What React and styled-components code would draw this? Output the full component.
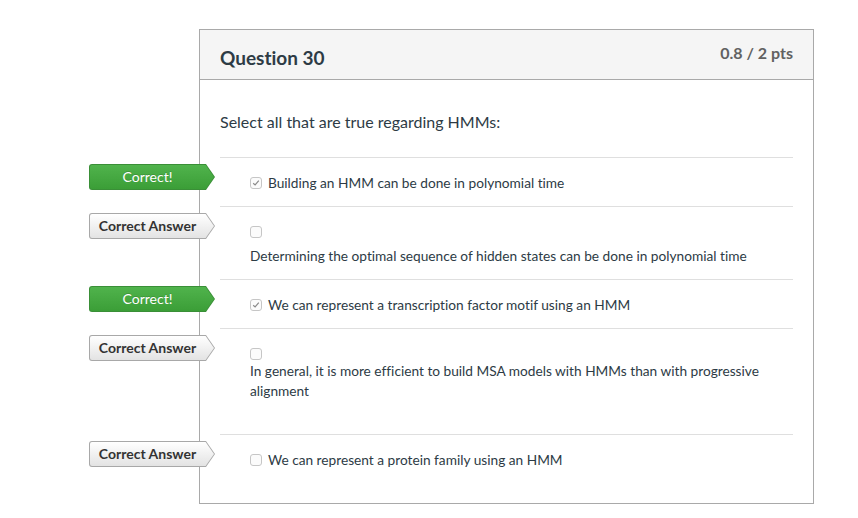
import React from "react";
import styled, { createGlobalStyle } from "styled-components";

const Global = createGlobalStyle`
  html, body { margin: 0; padding: 0; background: #fff; }
  body { font-family: Lato, "Open Sans", sans-serif; color: #2d3b45; }
`;

const Page = styled.div`
  padding: 29px 0 0 199px;
`;

const Card = styled.div`
  width: 613px;
  border: 1px solid #a9a9a9;
  background: #fff;
`;

const Header = styled.div`
  height: 49px;
  background: #f5f5f5;
  border-bottom: 1px solid #a9a9a9;
  display: flex;
  justify-content: space-between;
  align-items: flex-start;
  padding: 0 20px;
`;

const Title = styled.h2`
  margin: 0;
  padding-top: 16px;
  font-size: 19px;
  line-height: 24px;
  font-weight: 700;
  color: #2d3b45;
  font-variant-ligatures: none;
`;

const Points = styled.div`
  padding-top: 12px;
  font-size: 16px;
  line-height: 22px;
  font-weight: 700;
  color: #616161;
`;

const Body = styled.div`
  padding: 31px 20px 20px;
`;

const Prompt = styled.p`
  margin: 0 0 24px;
  font-size: 16px;
  line-height: 22px;
`;

const AnswerList = styled.div`
  display: flex;
  flex-direction: column;
`;

const Answer = styled.div`
  position: relative;
  border-top: 1px solid #dfdfdf;
  padding: 15px 0 ${(p) => p.$bottom}px 30px;
  font-size: 13.7px;
  line-height: 20px;
  font-variant-ligatures: none;
`;

const Line = styled.div`
  display: flex;
  align-items: center;
  gap: 6px;
  min-height: 20px;
`;

const AnswerText = styled.div`
  margin-top: ${(p) => p.$gap}px;
`;

const Box = styled.span`
  width: 12px;
  height: 12px;
  box-sizing: border-box;
  border: 1px solid #c6c6c6;
  border-radius: 3px;
  background: #fbfbfb;
  display: inline-flex;
  align-items: center;
  justify-content: center;
  flex: none;
`;

const Tag = styled.div`
  position: absolute;
  left: -131px;
  top: 6px;
  width: 126px;
  height: 26px;
  border-radius: 3px 0 0 3px;
  background: ${(p) => (p.$correct ? "#3a8f37" : "#a8a8a8")};
  clip-path: polygon(0 0, 117px 0, 126px 50%, 117px 100%, 0 100%);
  display: flex;
  align-items: center;
  justify-content: center;
  padding-right: 9px;
  box-sizing: border-box;
  font-size: 14px;
  font-weight: ${(p) => (p.$correct ? 400 : 700)};
  color: ${(p) => (p.$correct ? "#fff" : "#333")};
  text-shadow: ${(p) => (p.$correct ? "0 -1px 0 rgba(0,0,0,0.15)" : "none")};

  &::before {
    content: "";
    position: absolute;
    inset: 1px;
    border-radius: 2px 0 0 2px;
    background: ${(p) =>
      p.$correct
        ? "linear-gradient(#50b34c, #3b9e37)"
        : "linear-gradient(#ffffff, #e3e3e3)"};
    clip-path: polygon(0 0, 115.6px 0, 124px 50%, 115.6px 100%, 0 100%);
  }
`;

const TagLabel = styled.span`
  position: relative;
`;

const Check = () => (
  <svg width="8" height="8" viewBox="0 0 8 8">
    <path d="M1.2 4.2 L3.1 6 L6.8 1.6" fill="none" stroke="#8a8a8a" strokeWidth="1.2" />
  </svg>
);

const answers = [
  { tag: "correct", checked: true, text: "Building an HMM can be done in polynomial time", bottom: 13 },
  { tag: "answer", checked: false, block: true, gap: 4, text: "Determining the optimal sequence of hidden states can be done in polynomial time", bottom: 13 },
  { tag: "correct", checked: true, text: "We can represent a transcription factor motif using an HMM", bottom: 13 },
  { tag: "answer", checked: false, block: true, gap: -3, text: "In general, it is more efficient to build MSA models with HMMs than with progressive alignment", bottom: 33, wrap: 520 },
  { tag: "answer", checked: false, text: "We can represent a protein family using an HMM", bottom: 13 },
];

export default function App() {
  return (
    <Page>
      <Global />
      <Card>
        <Header>
          <Title>Question 30</Title>
          <Points>0.8 / 2 pts</Points>
        </Header>
        <Body>
          <Prompt>Select all that are true regarding HMMs:</Prompt>
          <AnswerList>
            {answers.map((a, i) => (
              <Answer key={i} $bottom={a.bottom}>
                <Tag $correct={a.tag === "correct"}>
                  <TagLabel>{a.tag === "correct" ? "Correct!" : "Correct Answer"}</TagLabel>
                </Tag>
                {a.block ? (
                  <>
                    <Line>
                      <Box>{a.checked && <Check />}</Box>
                    </Line>
                    <AnswerText $gap={a.gap} style={a.wrap ? { maxWidth: a.wrap } : undefined}>
                      {a.text}
                    </AnswerText>
                  </>
                ) : (
                  <Line>
                    <Box>{a.checked && <Check />}</Box>
                    <span>{a.text}</span>
                  </Line>
                )}
              </Answer>
            ))}
          </AnswerList>
        </Body>
      </Card>
    </Page>
  );
}
